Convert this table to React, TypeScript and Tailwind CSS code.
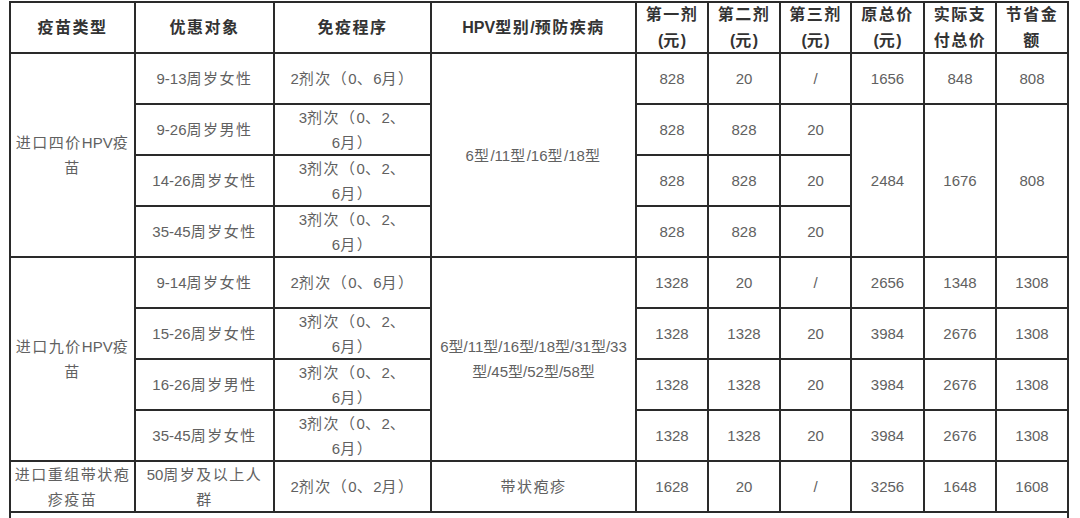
import React from "react";

type Cell = {
  text: string;
  span?: string;
  head?: boolean;
  plain?: boolean;
};

// split text into CJK / non-CJK runs so only the Chinese gets the wider tracking
function Spaced({ text, plain }: { text: string; plain?: boolean }) {
  const lines = text.split("\n");
  return (
    <>
      {lines.map((line, i) => (
        <div key={i} className="whitespace-nowrap">
          {line.split(/([\u3000-\u9fff\uff00-\uffef]+)/).map((part, j) =>
            /[\u3000-\u9fff\uff00-\uffef]/.test(part) && !plain ? (
              <span key={j} className="tracking-[1.5px]">{part}</span>
            ) : (
              <span key={j}>{part}</span>
            )
          )}
        </div>
      ))}
    </>
  );
}

const head: Cell[] = [
  { text: "疫苗类型" },
  { text: "优惠对象" },
  { text: "免疫程序" },
  { text: "HPV型别/预防疾病" },
  { text: "第一剂\n(元)" },
  { text: "第二剂\n(元)" },
  { text: "第三剂\n(元)" },
  { text: "原总价\n(元)" },
  { text: "实际支\n付总价" },
  { text: "节省金\n额" },
].map((c) => ({ ...c, head: true }));

const three = "3剂次（0、2、\n6月）";

const body: Cell[] = [
  // 四价
  { text: "进口四价HPV疫\n苗", span: "row-span-4" },
  { text: "9-13周岁女性" },
  { text: "2剂次（0、6月）" },
  { text: "6型/11型/16型/18型", span: "row-span-4" },
  { text: "828" }, { text: "20" }, { text: "/" }, { text: "1656" }, { text: "848" }, { text: "808" },
  { text: "9-26周岁男性" },
  { text: three },
  { text: "828" }, { text: "828" }, { text: "20" },
  { text: "2484", span: "row-span-3" },
  { text: "1676", span: "row-span-3" },
  { text: "808", span: "row-span-3" },
  { text: "14-26周岁女性" },
  { text: three },
  { text: "828" }, { text: "828" }, { text: "20" },
  { text: "35-45周岁女性" },
  { text: three },
  { text: "828" }, { text: "828" }, { text: "20" },
  // 九价
  { text: "进口九价HPV疫\n苗", span: "row-span-4" },
  { text: "9-14周岁女性" },
  { text: "2剂次（0、6月）" },
  { text: "6型/11型/16型/18型/31型/33\n型/45型/52型/58型", span: "row-span-4", plain: true },
  { text: "1328" }, { text: "20" }, { text: "/" }, { text: "2656" }, { text: "1348" }, { text: "1308" },
  { text: "15-26周岁女性" },
  { text: three },
  { text: "1328" }, { text: "1328" }, { text: "20" }, { text: "3984" }, { text: "2676" }, { text: "1308" },
  { text: "16-26周岁男性" },
  { text: three },
  { text: "1328" }, { text: "1328" }, { text: "20" }, { text: "3984" }, { text: "2676" }, { text: "1308" },
  { text: "35-45周岁女性" },
  { text: three },
  { text: "1328" }, { text: "1328" }, { text: "20" }, { text: "3984" }, { text: "2676" }, { text: "1308" },
  // 带状疱疹
  { text: "进口重组带状疱\n疹疫苗" },
  { text: "50周岁及以上人\n群" },
  { text: "2剂次（0、2月）" },
  { text: "带状疱疹" },
  { text: "1628" }, { text: "20" }, { text: "/" }, { text: "3256" }, { text: "1648" }, { text: "1608" },
];

export default function App() {
  return (
    <div
      className="h-[518px] w-[1080px] overflow-hidden bg-white pl-[9px] pt-[1px]"
      style={{ fontFamily: '"Liberation Sans", "Noto Sans CJK SC", sans-serif' }}
    >
      <div className="grid w-[1060px] grid-cols-[123px_137px_155px_203px_70px_70px_69px_71px_70px_70px] auto-rows-[49px] gap-[2px] bg-[#2a2a2a] p-[2px]">
        {[...head, ...body].map((c, i) => (
          <div
            key={i}
            className={`flex flex-col items-center justify-center bg-white text-center ${c.span ?? ""} ${
              c.head
                ? "text-[16px] leading-[26px] font-semibold text-[#333333]"
                : "text-[15px] leading-[25px] text-[#616161]"
            }`}
          >
            <Spaced text={c.text} plain={c.plain} />
          </div>
        ))}
        <div className="col-span-10 h-[40px] bg-white" />
      </div>
    </div>
  );
}
